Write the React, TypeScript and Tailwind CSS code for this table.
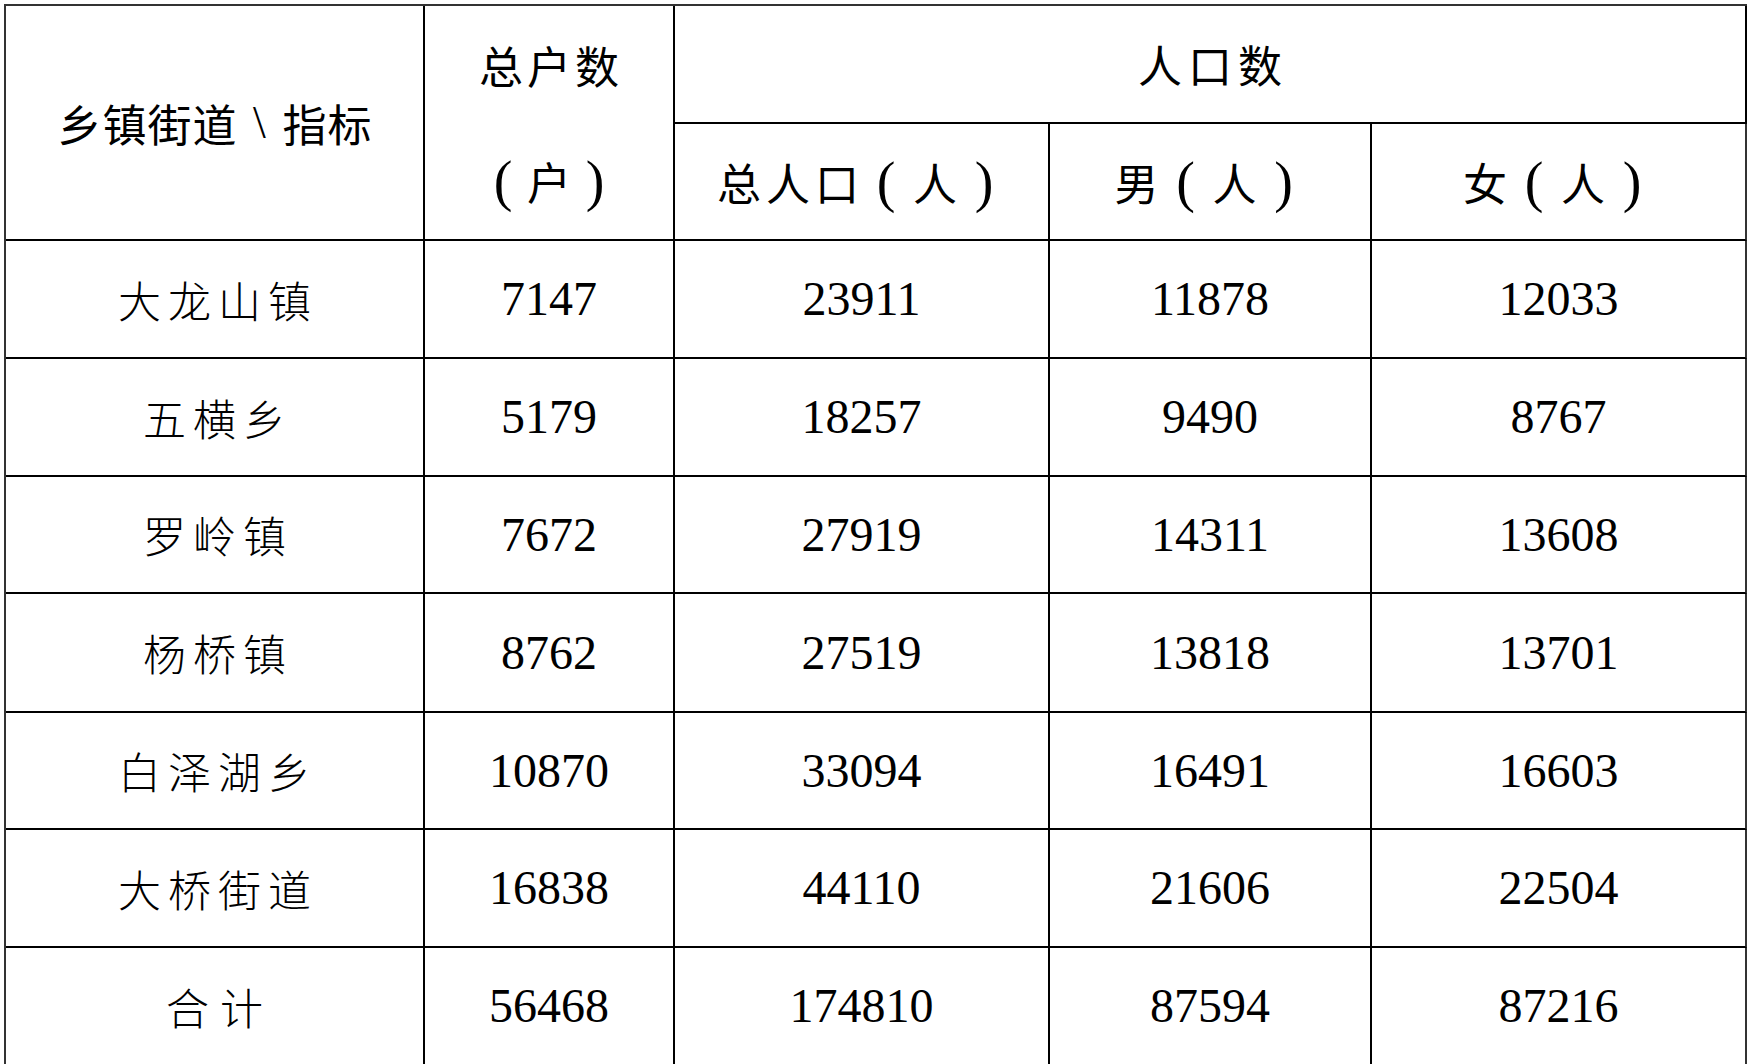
import React from "react";

const cjk = "font-['Noto_Sans_CJK_SC',sans-serif]";
const num = "font-['Liberation_Serif','Times_New_Roman',serif]";

const PUNCT: Record<string, [string, string]> = {
  "（": ["(", "text-[56px]"],
  "）": [")", "text-[56px]"],
  "＼": ["\\", "text-[46px]"],
};

// Each character sits centred in a fixed-width box, like the reference's
// evenly spaced Kai/FangSong lettering (with centred, slim parens).
function Chars({ t, w }: { t: string; w: string }) {
  return (
    <span className="flex items-center">
      {Array.from(t).map((c, i) =>
        PUNCT[c] ? (
          <span
            key={i}
            className={`${w} inline-block text-center font-['Liberation_Serif',serif] font-normal ${PUNCT[c][1]} leading-none`}
          >
            {PUNCT[c][0]}
          </span>
        ) : (
          <span key={i} className={`${w} inline-block text-center`}>
            {c}
          </span>
        )
      )}
    </span>
  );
}

const rows: [string, string, string, string, string][] = [
  ["大龙山镇", "7147", "23911", "11878", "12033"],
  ["五横乡", "5179", "18257", "9490", "8767"],
  ["罗岭镇", "7672", "27919", "14311", "13608"],
  ["杨桥镇", "8762", "27519", "13818", "13701"],
  ["白泽湖乡", "10870", "33094", "16491", "16603"],
  ["大桥街道", "16838", "44110", "21606", "22504"],
  ["合计", "56468", "174810", "87594", "87216"],
];

const cell =
  "border-r-2 border-b-2 border-black flex items-center justify-center text-black";

export default function App() {
  return (
    <div className="w-[1749px] h-[1064px] overflow-hidden bg-white pl-[4px] pt-[4px]">
      <div className="grid w-[1743px] grid-cols-[419px_250px_375px_322px_375px] grid-rows-[118px_117px_118px_118px_117px_119px_117px_118px_118px] border-l-2 border-t-2 border-l-[#333] border-t-[#333]">
        {/* header */}
        <div className={`${cell} ${cjk} row-span-2 text-[44px] leading-none`}>
          <Chars t="乡镇街道＼指标" w="w-[45px]" />
        </div>
        <div
          className={`border-r-2 border-b-2 border-black row-span-2 flex flex-col ${cjk} text-[44px] leading-none`}
        >
          <div className="h-[117px] flex items-center justify-center">
            <Chars t="总户数" w="w-[48px]" />
          </div>
          <div className="flex-1 flex items-center justify-center">
            <Chars t="（户）" w="w-[46px]" />
          </div>
        </div>
        <div className={`${cell} ${cjk} col-span-3 text-[44px] leading-none`}>
          <Chars t="人口数" w="w-[50px]" />
        </div>
        <div className={`${cell} ${cjk} text-[44px] leading-none`}>
          <Chars t="总人口（人）" w="w-[49px]" />
        </div>
        <div className={`${cell} ${cjk} text-[44px] leading-none`}>
          <Chars t="男（人）" w="w-[49px]" />
        </div>
        <div className={`${cell} border-r-[#333] ${cjk} text-[44px] leading-none`}>
          <Chars t="女（人）" w="w-[49px]" />
        </div>

        {/* data */}
        {rows.map((r, i) => {
          const last = i === rows.length - 1;
          const bb = last ? "border-b-[#c8c8c8]" : "";
          return (
            <React.Fragment key={r[0]}>
              <div
                className={`${cell} ${bb} ${cjk} text-[43px] font-light leading-none`}
              >
                <Chars t={r[0]} w={last ? "w-[54px]" : "w-[50px]"} />
              </div>
              {r.slice(1, 5).map((v, j) => (
                <div
                  key={j}
                  className={`${cell} ${bb} ${j === 3 ? "border-r-[#333]" : ""} ${num} text-[48px] leading-none`}
                >
                  {v}
                </div>
              ))}
            </React.Fragment>
          );
        })}
      </div>
    </div>
  );
}
